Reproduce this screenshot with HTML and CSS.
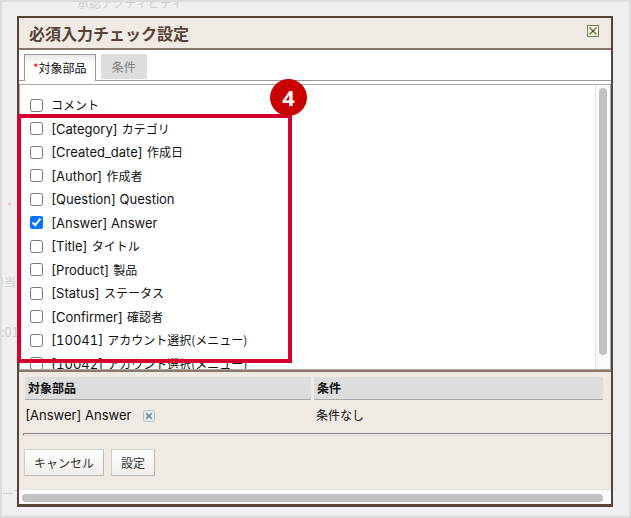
FILE: index.html
```html
<!DOCTYPE html>
<html lang="ja">
<head>
<meta charset="utf-8">
<title>必須入力チェック設定</title>
<link rel="stylesheet" href="styles.css">
</head>
<body>
<div class="backdrop" aria-hidden="true">
  <span class="ghost ghost-top">承認アクティビティ</span>
  <span class="ghost ghost-required">*</span>
  <span class="ghost ghost-owner">担当</span>
  <span class="ghost ghost-time">:01</span>
  <span class="ghost ghost-group">ープ</span>
</div>
<main class="dialog">
  <header class="dialog-header">
    <h1>必須入力チェック設定</h1>
    <button class="close" type="button" aria-label="閉じる">
      <svg viewBox="0 0 12 12" width="12" height="12"><rect x=".5" y=".5" width="11" height="11" fill="#f2f3df" stroke="#76805a"/><path d="M2.5 2.5l7 7M9.5 2.5l-7 7" stroke="#66704a" stroke-width="1.2"/><rect x="5" y="5" width="2" height="2" fill="#4d5634"/></svg>
    </button>
  </header>
  <nav class="tabs">
    <button class="tab active" type="button"><span class="required">*</span>対象部品</button>
    <button class="tab" type="button">条件</button>
  </nav>
  <section class="parts">
    <div class="list">
      <label class="row"><input type="checkbox">コメント</label>
      <label class="row"><input type="checkbox"><span class="latin">[Category]</span>カテゴリ</label>
      <label class="row"><input type="checkbox"><span class="latin">[Created_date]</span>作成日</label>
      <label class="row"><input type="checkbox"><span class="latin">[Author]</span>作成者</label>
      <label class="row"><input type="checkbox"><span class="latin">[Question] Question</span></label>
      <label class="row"><input type="checkbox" checked><span class="latin">[Answer] Answer</span></label>
      <label class="row"><input type="checkbox"><span class="latin">[Title]</span>タイトル</label>
      <label class="row"><input type="checkbox"><span class="latin">[Product]</span>製品</label>
      <label class="row"><input type="checkbox"><span class="latin">[Status]</span>ステータス</label>
      <label class="row"><input type="checkbox"><span class="latin">[Confirmer]</span>確認者</label>
      <label class="row"><input type="checkbox"><span class="latin">[10041]</span>アカウント選択(メニュー)</label>
      <label class="row"><input type="checkbox"><span class="latin">[10042]</span>アカウント選択(メニュー)</label>
    </div>
    <div class="scroll-y"><div class="thumb"></div></div>
    <div class="highlight"><span class="badge">4</span></div>
  </section>
  <section class="summary">
    <table>
      <thead><tr><th>対象部品</th><th>条件</th></tr></thead>
      <tbody><tr>
        <td><span class="latin">[Answer] Answer</span><button class="remove" type="button" aria-label="削除"><svg viewBox="0 0 12 12" width="12" height="12"><rect x=".5" y=".5" width="11" height="11" rx="2" fill="#e6ebed" stroke="#b3bfc4"/><path d="M3.2 3.2l5.6 5.6M8.8 3.2L3.2 8.8" stroke="#70838d" stroke-width="1.6"/></svg></button></td>
        <td>条件なし</td>
      </tr></tbody>
    </table>
    <hr>
    <div class="actions">
      <button type="button">キャンセル</button>
      <button type="button">設定</button>
    </div>
  </section>
  <div class="scroll-x"><div class="thumb"></div></div>
</main>
</body>
</html>
```
FILE: styles.css
```css
* { box-sizing: border-box; }

body {
  margin: 0;
  height: 100vh;
  padding: 16px 18px 11px 17px;
  display: flex;
  background: #efefef;
  color: #111;
  font: 12px/24px "Noto Sans CJK JP", sans-serif;
}

button { font: inherit; color: inherit; margin: 0; }

.latin {
  margin-right: 4px;
  font-family: Inter, "Noto Sans CJK JP", sans-serif;
  font-size: 13px;
  font-variant-numeric: tabular-nums;
}

.backdrop {
  position: absolute;
  inset: 0;
  overflow: hidden;
  border: 2px solid #dcdcdc;
}

.ghost { position: absolute; color: #cfcfcf; line-height: 16px; white-space: nowrap; }
.ghost-top { left: 75px; top: -7px; }
.ghost-required { left: 5px; top: 197px; color: #efc4c4; }
.ghost-owner { left: -10px; top: 272px; }
.ghost-time { left: -1px; top: 322px; font-size: 13px; }
.ghost-group { left: 0; top: 484px; }

.dialog {
  position: relative;
  flex: 1;
  min-width: 0;
  display: flex;
  flex-direction: column;
  background: #fff;
  border: 2px solid #594338;
  border-bottom-width: 3px;
}

.dialog-header {
  display: flex;
  justify-content: space-between;
  align-items: flex-start;
  height: 32px;
  padding: 0 12px 0 10px;
  background: #efeae3;
  border-bottom: 2px solid #8a7668;
}

h1 { margin: 0; font-size: 16px; line-height: 30px; font-weight: 700; color: #594338; }

.close, .remove { padding: 0; border: 0; background: none; line-height: 0; }
.close { margin-top: 7px; }

.tabs {
  display: flex;
  gap: 5px;
  height: 31px;
  padding: 4px 5px 0;
  border-bottom: 1px solid #999;
}

.tab {
  height: 25px;
  padding: 0 11px;
  border: 0;
  background: #ddd;
  color: #808080;
}

.tab.active {
  height: 27px;
  padding: 0 8px;
  border: 1px solid #999;
  border-bottom: 0;
  background: linear-gradient(#e8e8e8, #fff 9px);
  color: #111;
}

.required { color: #f00; }

.parts {
  position: relative;
  flex: 1;
  min-height: 0;
  display: flex;
  margin-top: 3px;
  border: 1px solid #aaa;
}

.list { flex: 1; min-width: 0; overflow: hidden; padding: 8px 10px 0; }

.row { display: flex; align-items: center; height: 24px; white-space: nowrap; }
.row:nth-child(even) { height: 23px; }
.row input { width: 13px; height: 13px; margin: 0 8px 0 0; flex: none; }

.scroll-y { width: 15px; padding: 3px 2px 14px 3px; background: #fafafa; border-left: 1px solid #e4e4e4; }
.scroll-y .thumb { width: 8px; height: 100%; border-radius: 4px; background: #c1c1c1; }

.highlight {
  position: absolute;
  left: -3px;
  top: 29px;
  width: 275px;
  height: 249px;
  border: 4px solid #d6002f;
}

.badge {
  position: absolute;
  right: -19px;
  top: -39px;
  width: 37px;
  height: 37px;
  border-radius: 50%;
  background: #c80000;
  color: #fff;
  font: 700 22px/36px "Noto Sans", sans-serif;
  text-align: center;
}

.summary { background: #efeae3; border-top: 2px solid #8a7a6e; padding: 5px 0 13px; }

table { width: 100%; border-collapse: separate; border-spacing: 0; table-layout: fixed; padding: 0 8px 0 6px; }
th { height: 23px; padding: 0 3px; background: #ddd; border-bottom: 1px solid #aaa; text-align: left; line-height: 22px; }
td { height: 29px; padding: 0; }
th + th { box-shadow: -3px 0 0 #efeae3; }
td + td { padding-left: 2px; }
td .latin { margin-right: 12px; }
.remove { vertical-align: middle; }

hr { margin: 4px 0 0 4px; border: 0; border-top: 1px solid #888; border-left: 1px solid #888; height: 3px; border-bottom: 1px solid #ddd; }

.actions { display: flex; gap: 7px; padding: 13px 5px 0; }
.actions button {
  height: 27px;
  padding: 0 9px;
  border: 1px solid #d2d0cc;
  border-right-color: #bbb9b5;
  border-bottom-color: #bbb9b5;
  background: linear-gradient(#fff, #f0eeea);
  color: #333;
}

.scroll-x { height: 15px; padding: 4px 8px 3px 3px; background: #fafafa; border-top: 1px solid #e4e4e4; }
.scroll-x .thumb { height: 8px; border-radius: 4px; background: #c1c1c1; }
```
